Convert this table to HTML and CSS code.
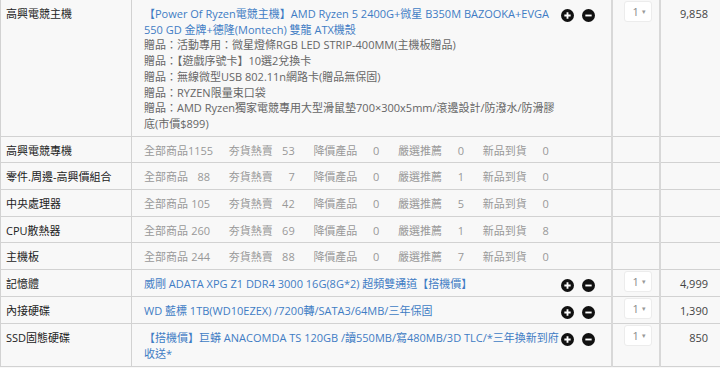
FILE: index.html
```html
<!DOCTYPE html>
<html lang="zh-Hant">
<head>
<meta charset="utf-8">
<link rel="stylesheet" href="styles.css">
</head>
<body>
<table class="cart">
  <colgroup>
    <col class="c-cat"><col class="c-item"><col class="c-qty"><col class="c-price">
  </colgroup>
  <tr>
    <td class="cat">高興電競主機</td>
    <td class="item">
      <div class="item-row">
        <div class="desc">
          <a class="link">【Power Of Ryzen電競主機】AMD Ryzen 5 2400G+微星 B350M BAZOOKA+EVGA 550 GD 金牌+德隆(Montech) 雙龍 ATX機殼</a>
          <div class="gift">贈品：活動專用：微星燈條RGB LED STRIP-400MM(主機板贈品)</div>
          <div class="gift">贈品：【遊戲序號卡】10選2兌換卡</div>
          <div class="gift">贈品：無線微型USB 802.11n網路卡(贈品無保固)</div>
          <div class="gift">贈品：RYZEN限量束口袋</div>
          <div class="gift">贈品：AMD Ryzen獨家電競專用大型滑鼠墊700×300x5mm/滾邊設計/防潑水/防滑膠底(市價$899)</div>
        </div>
        <div class="ops">
          <svg class="op" viewBox="0 0 14 14"><circle cx="7" cy="7" r="7"/><path d="M3.6 7h6.8M7 3.6v6.8"/></svg>
          <svg class="op" viewBox="0 0 14 14"><circle cx="7" cy="7" r="7"/><path d="M3.6 7h6.8"/></svg>
        </div>
      </div>
    </td>
    <td class="qty"><span class="sel">1<span class="caret">▾</span></span></td>
    <td class="price">9,858</td>
  </tr>
  <tr>
    <td class="cat">高興電競專機</td>
    <td class="item">
      <div class="stats">
        <span class="seg"><span class="lbl">全部商品</span><span class="num">1155</span></span>
        <span class="seg"><span class="lbl">夯貨熱賣</span><span class="num">53</span></span>
        <span class="seg"><span class="lbl">降價產品</span><span class="num">0</span></span>
        <span class="seg"><span class="lbl">嚴選推薦</span><span class="num">0</span></span>
        <span class="seg"><span class="lbl">新品到貨</span><span class="num">0</span></span>
      </div>
    </td>
    <td class="qty"></td>
    <td class="price"></td>
  </tr>
  <tr>
    <td class="cat">零件.周邊-高興價組合</td>
    <td class="item">
      <div class="stats">
        <span class="seg"><span class="lbl">全部商品</span><span class="num">88</span></span>
        <span class="seg"><span class="lbl">夯貨熱賣</span><span class="num">7</span></span>
        <span class="seg"><span class="lbl">降價產品</span><span class="num">0</span></span>
        <span class="seg"><span class="lbl">嚴選推薦</span><span class="num">1</span></span>
        <span class="seg"><span class="lbl">新品到貨</span><span class="num">0</span></span>
      </div>
    </td>
    <td class="qty"></td>
    <td class="price"></td>
  </tr>
  <tr>
    <td class="cat">中央處理器</td>
    <td class="item">
      <div class="stats">
        <span class="seg"><span class="lbl">全部商品</span><span class="num">105</span></span>
        <span class="seg"><span class="lbl">夯貨熱賣</span><span class="num">42</span></span>
        <span class="seg"><span class="lbl">降價產品</span><span class="num">0</span></span>
        <span class="seg"><span class="lbl">嚴選推薦</span><span class="num">5</span></span>
        <span class="seg"><span class="lbl">新品到貨</span><span class="num">0</span></span>
      </div>
    </td>
    <td class="qty"></td>
    <td class="price"></td>
  </tr>
  <tr>
    <td class="cat">CPU散熱器</td>
    <td class="item">
      <div class="stats">
        <span class="seg"><span class="lbl">全部商品</span><span class="num">260</span></span>
        <span class="seg"><span class="lbl">夯貨熱賣</span><span class="num">69</span></span>
        <span class="seg"><span class="lbl">降價產品</span><span class="num">0</span></span>
        <span class="seg"><span class="lbl">嚴選推薦</span><span class="num">1</span></span>
        <span class="seg"><span class="lbl">新品到貨</span><span class="num">8</span></span>
      </div>
    </td>
    <td class="qty"></td>
    <td class="price"></td>
  </tr>
  <tr>
    <td class="cat">主機板</td>
    <td class="item">
      <div class="stats">
        <span class="seg"><span class="lbl">全部商品</span><span class="num">244</span></span>
        <span class="seg"><span class="lbl">夯貨熱賣</span><span class="num">88</span></span>
        <span class="seg"><span class="lbl">降價產品</span><span class="num">0</span></span>
        <span class="seg"><span class="lbl">嚴選推薦</span><span class="num">7</span></span>
        <span class="seg"><span class="lbl">新品到貨</span><span class="num">0</span></span>
      </div>
    </td>
    <td class="qty"></td>
    <td class="price"></td>
  </tr>
  <tr>
    <td class="cat">記憶體</td>
    <td class="item">
      <div class="item-row">
        <div class="desc"><a class="link">威剛 ADATA XPG Z1 DDR4 3000 16G(8G*2) 超頻雙通道【搭機價】</a></div>
        <div class="ops">
          <svg class="op" viewBox="0 0 14 14"><circle cx="7" cy="7" r="7"/><path d="M3.6 7h6.8M7 3.6v6.8"/></svg>
          <svg class="op" viewBox="0 0 14 14"><circle cx="7" cy="7" r="7"/><path d="M3.6 7h6.8"/></svg>
        </div>
      </div>
    </td>
    <td class="qty"><span class="sel">1<span class="caret">▾</span></span></td>
    <td class="price">4,999</td>
  </tr>
  <tr>
    <td class="cat">內接硬碟</td>
    <td class="item">
      <div class="item-row">
        <div class="desc"><a class="link">WD 藍標 1TB(WD10EZEX) /7200轉/SATA3/64MB/三年保固</a></div>
        <div class="ops">
          <svg class="op" viewBox="0 0 14 14"><circle cx="7" cy="7" r="7"/><path d="M3.6 7h6.8M7 3.6v6.8"/></svg>
          <svg class="op" viewBox="0 0 14 14"><circle cx="7" cy="7" r="7"/><path d="M3.6 7h6.8"/></svg>
        </div>
      </div>
    </td>
    <td class="qty"><span class="sel">1<span class="caret">▾</span></span></td>
    <td class="price">1,390</td>
  </tr>
  <tr>
    <td class="cat">SSD固態硬碟</td>
    <td class="item">
      <div class="item-row">
        <div class="desc"><a class="link">【搭機價】巨蟒 ANACOMDA TS 120GB /讀550MB/寫480MB/3D TLC/*三年換新到府收送*</a></div>
        <div class="ops">
          <svg class="op" viewBox="0 0 14 14"><circle cx="7" cy="7" r="7"/><path d="M3.6 7h6.8M7 3.6v6.8"/></svg>
          <svg class="op" viewBox="0 0 14 14"><circle cx="7" cy="7" r="7"/><path d="M3.6 7h6.8"/></svg>
        </div>
      </div>
    </td>
    <td class="qty"><span class="sel">1<span class="caret">▾</span></span></td>
    <td class="price">850</td>
  </tr>
</table>
</body>
</html>
```

FILE: styles.css
```css
html, body {
  margin: 0;
  padding: 0;
  background: #f8f8f8;
}

body {
  font-family: "Open Sans", "Noto Sans CJK TC", sans-serif;
  font-size: 11px;
  line-height: 15.7px;
  color: #333;
  overflow: hidden;
}

.cart {
  border-collapse: collapse;
  table-layout: fixed;
  width: 721px;
  background: #f8f8f8;
  border-left: 1px solid #a8a8a8;
}

.c-cat { width: 131px; }
.c-item { width: 480px; }
.c-qty { width: 48px; }
.c-price { width: 62px; }

.cart td {
  border: 1px solid #d2d2d2;
  vertical-align: top;
  padding: 6px 5px 4px;
}

.cart tr:first-child td {
  border-top: 0;
}

.cat {
  color: #222;
  white-space: nowrap;
}

.cart td.item {
  padding-left: 12px;
  padding-right: 16px;
}

.item-row {
  display: flex;
  align-items: flex-start;
}

.desc {
  flex: 1;
  min-width: 0;
}

.link {
  color: #3f7cc4;
  text-decoration: none;
}

.gift {
  color: #666;
}

.ops {
  display: flex;
  gap: 8px;
  margin-top: 3px;
}

.op {
  width: 13px;
  height: 13px;
  display: block;
}

.op circle {
  fill: #111;
}

.op path {
  stroke: #fff;
  stroke-width: 2;
  fill: none;
}

.cart td.qty {
  padding: 1px 0 0;
  text-align: center;
  border-left: 2px solid #d8d8d8;
}

.sel {
  display: inline-flex;
  align-items: center;
  box-sizing: border-box;
  width: 28px;
  height: 21px;
  padding-left: 8px;
  gap: 3px;
  background: #fff;
  border: 1px solid #ececec;
  border-radius: 3px;
  color: #888;
  font-size: 11px;
  margin-left: 4px;
}

.caret {
  font-size: 7px;
  color: #999;
}

.cart td.price {
  text-align: right;
  padding-right: 13px;
  color: #444;
  border-left: 2px solid #d8d8d8;
}

.stats {
  display: flex;
  color: #999;
}

.seg {
  display: flex;
  width: 84.7px;
  flex: none;
}

.lbl {
  width: 44px;
}

.num {
  width: 22px;
  text-align: right;
  white-space: nowrap;
}
```
